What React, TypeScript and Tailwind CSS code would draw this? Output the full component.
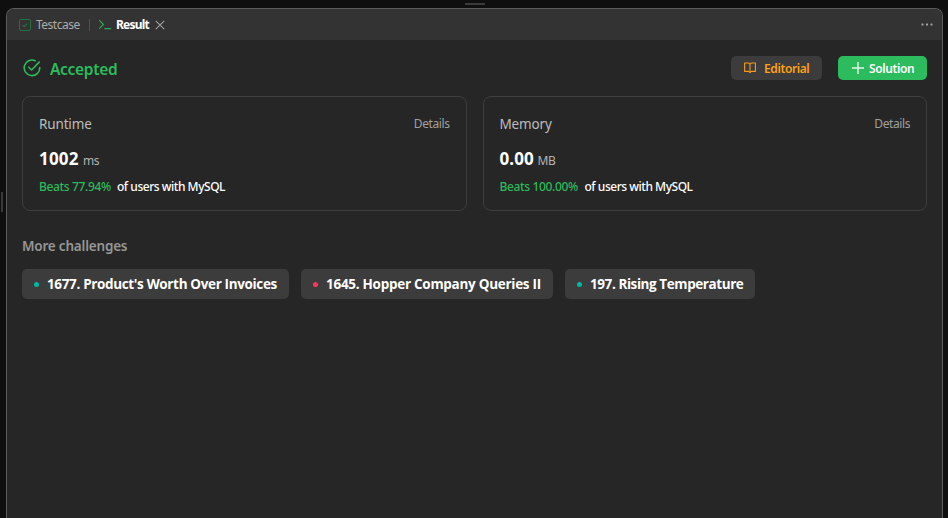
import type { ReactNode } from "react";

function T({ className, children }: { className: string; children: ReactNode }) {
  return <span className={`block shrink-0 whitespace-nowrap ${className}`}>{children}</span>;
}

type Stat = {
  label: string;
  value: string;
  unit: string;
  beats: string;
  valueClass: string;
  beatsClass: string;
};

const stats: Stat[] = [
  { label: "Runtime", value: "1002", unit: "ms", beats: "Beats 77.94%", valueClass: "w-[44px] tracking-[0.2px]", beatsClass: "w-[78px]" },
  { label: "Memory", value: "0.00", unit: "MB", beats: "Beats 100.00%", valueClass: "w-[38px] tracking-[0.1px]", beatsClass: "w-[85px]" },
];

const challenges = [
  { title: "1677. Product's Worth Over Invoices", dot: "bg-[#00b8a3]", width: "w-[267px] tracking-[-0.35px]" },
  { title: "1645. Hopper Company Queries II", dot: "bg-[#ff375f]", width: "w-[252px] tracking-[-0.28px]" },
  { title: "197. Rising Temperature", dot: "bg-[#00b8a3]", width: "w-[190px] tracking-[-0.42px]" },
];

function StatCard({ s }: { s: Stat }) {
  return (
    <div className="h-[115px] min-w-0 flex-1 rounded-lg border border-[#3e3e3e] px-4 pt-[17px]">
      <div className="flex h-5 items-center justify-between">
        <T className="text-[13.5px] leading-5 tracking-[-0.15px] text-[#bdbdbd]">{s.label}</T>
        <T className="text-[12px] leading-5 tracking-[-0.4px] text-[#a0a0a0]">Details</T>
      </div>
      <div className="mt-[11px] flex h-7 items-baseline">
        <T className={`text-[17px] leading-7 font-bold text-white ${s.valueClass}`}>{s.value}</T>
        <T className="text-[12px] leading-7 tracking-[-0.5px] text-[#b3b3b3]">{s.unit}</T>
      </div>
      <div className="mt-1 flex h-5 items-center text-[12px] leading-5 font-medium">
        <T className={`tracking-[-0.35px] text-[#2cbb5d] ${s.beatsClass}`}>{s.beats}</T>
        <T className="tracking-[-0.47px] text-white">of users with MySQL</T>
      </div>
    </div>
  );
}

export default function App() {
  return (
    <div className="flex h-[518px] w-[948px] flex-col overflow-hidden bg-[#0f0f0f] font-['Noto_Sans','Open_Sans',sans-serif]">
      <div className="flex h-2 shrink-0 justify-center pt-[3px] pl-[2px]">
        <div className="h-[2px] w-5 bg-[#3a3a3a]" />
      </div>
      <div className="flex min-h-0 flex-1">
        <div className="w-1.5 shrink-0 pt-[184px] pl-px">
          <div className="h-5 w-[2px] bg-[#3a3a3a]" />
        </div>
        <main className="w-[937px] shrink-0 overflow-hidden rounded-t-lg border border-b-0 border-[#5c5c5c] bg-[#262626]">
          <header className="flex h-[31px] items-center bg-[#333333] pr-[9px] pl-3">
            <svg className="shrink-0" width="12" height="12" viewBox="0 0 12 12" fill="none" stroke="#27703f" strokeWidth="1">
              <rect x="0.5" y="0.5" width="11" height="11" rx="1.5" />
              <path d="M3.8 6.2 5.2 7.6 8.2 4.6" strokeWidth="1.2" />
            </svg>
            <T className="ml-[5px] w-[53px] text-[12px] leading-5 tracking-[-0.5px] text-[#adadad]">Testcase</T>
            <div className="h-3 w-px bg-[#505050]" />
            <svg className="ml-2 shrink-0" width="14" height="12" viewBox="0 0 14 12" fill="none" stroke="#2ba653" strokeWidth="1.2">
              <path d="M1.2 1.2 5.4 5.5 1.2 9.7" />
              <path d="M6.4 9.6h6.8" />
            </svg>
            <T className="ml-[4px] w-[39px] text-[12px] leading-5 font-bold tracking-[-0.8px] text-white">Result</T>
            <svg className="shrink-0" width="10" height="10" viewBox="0 0 10 10" stroke="#a0a0a0" strokeWidth="1.1">
              <path d="M.8.8l8.4 8.4M9.2.8.8 9.2" />
            </svg>
            <svg className="ml-auto shrink-0" width="12" height="4" viewBox="0 0 12 4" fill="#a3a3a3">
              <rect x="0.5" y="0.6" width="2" height="2" rx="0.5" />
              <rect x="5" y="0.6" width="2" height="2" rx="0.5" />
              <rect x="9.5" y="0.6" width="2" height="2" rx="0.5" />
            </svg>
          </header>
          <div className="px-[15px] pt-4">
            <div className="flex h-6 items-center">
              <svg className="ml-px shrink-0" width="18" height="18" viewBox="0 0 18 18" fill="none" stroke="#2cbb5d" strokeWidth="1.6" strokeLinecap="round" strokeLinejoin="round">
                <path d="M12.2 1.7A7.8 7.8 0 1 0 16.8 8.6" />
                <path d="M5.8 8.2 8.6 11 16.2 3.1" />
              </svg>
              <T className="ml-[9px] pt-px text-[15.5px] leading-6 font-semibold tracking-[-0.3px] text-[#2cbb5d]">Accepted</T>
              <div className="ml-auto flex gap-4">
                <button className="flex h-6 w-[91px] items-center rounded-[5px] bg-[#3c3c3c] pl-[13px]">
                  <svg className="shrink-0" width="12" height="12" viewBox="0 0 12 12" fill="none" stroke="#f59a1b" strokeWidth="1.1" strokeLinejoin="round">
                    <path d="M6 2.2C5.5 1.3 4.8 1 4 1H.6v8.4h3.6c.9 0 1.4.4 1.8 1.2.4-.8.9-1.2 1.8-1.2h3.6V1H8c-.8 0-1.5.3-2 1.2Z" />
                    <path d="M6 2.2v8.6" />
                  </svg>
                  <T className="ml-2 pt-[2px] text-[12px] leading-6 font-semibold tracking-[-0.4px] text-[#ffa116]">Editorial</T>
                </button>
                <button className="flex h-6 w-[89px] items-center rounded-[5px] bg-[#2cbb5d] pl-[14px]">
                  <svg className="shrink-0" width="12" height="12" viewBox="0 0 12 12" stroke="#e4f6ea" strokeWidth="1.4">
                    <path d="M6 0v12M0 6h12" />
                  </svg>
                  <T className="ml-[5px] pt-[2px] text-[12px] leading-6 font-semibold tracking-[-0.4px] text-white">Solution</T>
                </button>
              </div>
            </div>
            <div className="mt-4 flex gap-4">
              {stats.map((s) => (
                <StatCard key={s.label} s={s} />
              ))}
            </div>
            <T className="mt-[25px] text-[13.5px] leading-5 font-semibold tracking-[-0.2px] text-[#969696]">More challenges</T>
            <div className="mt-[13px] flex gap-3 font-['Open_Sans',sans-serif]">
              {challenges.map((c) => (
                <a key={c.title} className={`flex h-[30px] items-center rounded-[5px] bg-[#3c3c3c] pl-3 ${c.width}`}>
                  <span className={`mt-px size-[5px] shrink-0 rounded-full ${c.dot}`} />
                  <T className="ml-[8px] text-[13.5px] leading-[30px] font-bold text-white">{c.title}</T>
                </a>
              ))}
            </div>
          </div>
        </main>
      </div>
    </div>
  );
}
